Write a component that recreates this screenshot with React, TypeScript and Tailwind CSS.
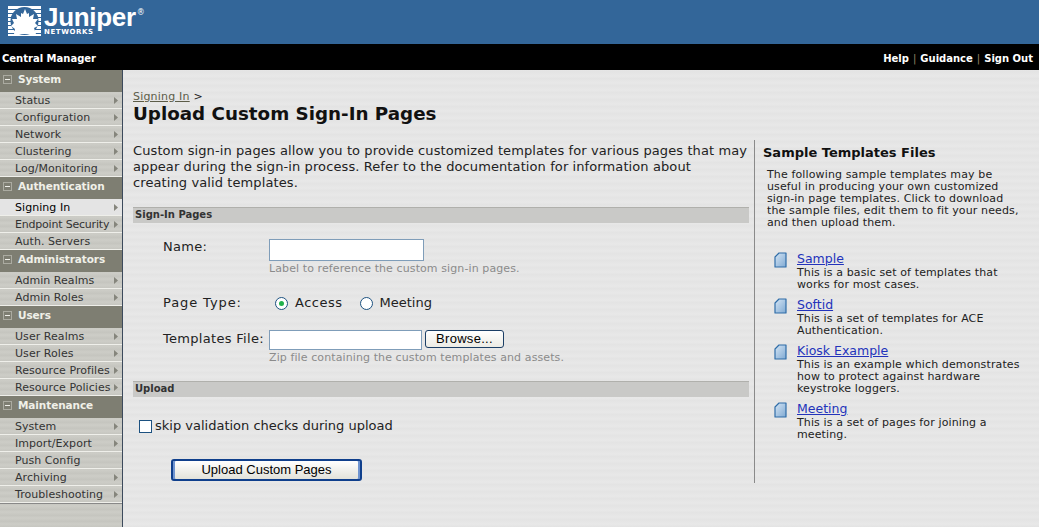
const V = "[font-family:'DejaVu_Sans',Verdana,sans-serif]";

function Chevron() {
  return (
    <svg width="4" height="7" viewBox="0 0 4 7" className="shrink-0">
      <path d="M0 0L4 3.5L0 7Z" fill="#85857c" />
    </svg>
  );
}

function Minus() {
  return (
    <svg width="9" height="9" viewBox="0 0 9 9" className="shrink-0">
      <rect x="0.5" y="0.5" width="8" height="8" fill="none" stroke="#d8d8d0" strokeDasharray="1 1" />
      <rect x="2" y="4" width="5" height="1" fill="#f0f0ea" />
    </svg>
  );
}

function Item({ label, arrow = true, active = false }: { label: string; arrow?: boolean; active?: boolean }) {
  return (
    <div
      className={`flex h-[17px] items-center justify-between whitespace-nowrap border-b border-[#efefea] pl-[15px] pr-[4px] text-[11px] leading-none ${
        active ? "bg-[#e4e4e4] text-black" : "bg-[#c8c8c2] bg-[repeating-linear-gradient(0deg,#c6c6c0_0px,#cdcdc7_3px,#c4c4be_6px)] text-[#333]"
      } ${label === "Endpoint Security" ? "tracking-[-0.2px]" : "tracking-[0.05px]"}`}
    >
      <span>{label}</span>
      {arrow && <Chevron />}
    </div>
  );
}

function Header({ label }: { label: string }) {
  return (
    <div className="flex h-[22px] items-center gap-[6px] bg-[#7e7e72] pb-[4px] pl-[3px] text-[10.5px] font-bold leading-none tracking-[-0.1px] text-[#f0f0e8]">
      <Minus />
      <span>{label}</span>
    </div>
  );
}

function Section({ title, items }: { title: string; items: [string, boolean?, boolean?][] }) {
  return (
    <div>
      <Header label={title} />
      {items.map(([l, a, act]) => (
        <Item key={l} label={l} arrow={a !== false} active={!!act} />
      ))}
    </div>
  );
}

function SectionBar({ label }: { label: string }) {
  return (
    <div className="h-[16px] border-t border-[#b0b0ac] bg-[#c9c9c7] pl-[2px] text-[10px] font-bold leading-[14px] text-[#333]">
      {label}
    </div>
  );
}

function DocIcon() {
  return (
    <svg width="13" height="16" viewBox="0 0 13 16" className="shrink-0">
      <defs>
        <linearGradient id="doc" x1="0" y1="0" x2="1" y2="1">
          <stop offset="0" stopColor="#d6e6f5" />
          <stop offset="1" stopColor="#7fa9d2" />
        </linearGradient>
      </defs>
      <path d="M5 1H12V15H1V5Z" fill="url(#doc)" stroke="#2f6da8" strokeWidth="1.2" strokeLinejoin="round" />
    </svg>
  );
}

function Sample({ title, text }: { title: string; text: string[] }) {
  return (
    <div className="flex gap-[10px] pl-[11px]">
      <div className="pt-[2px]">
        <DocIcon />
      </div>
      <div>
        <a className="block text-[12.5px] leading-[17px] text-[#2233bb] underline">{title}</a>
        <div className="text-[11px] leading-[12px] tracking-[0.12px] text-[#222]">
          {text.map((t) => (
            <div key={t}>{t}</div>
          ))}
        </div>
      </div>
    </div>
  );
}

function Logo() {
  return (
    <div className="flex items-start pl-[8px] pt-[6px] text-white">
      <svg width="33" height="30" viewBox="0 0 33 30" className="shrink-0">
        <rect x="0" y="0" width="33" height="30" fill="#fff" />
        {[3, 7, 11, 15, 19, 23, 27].map((y) => (
          <rect key={y} x="0" y={y} width="33" height="1" fill="#336699" />
        ))}
        <circle cx="16.5" cy="15" r="14" fill="#336699" />
        <path d="M17 3L19 8L21 7L21 11L26 8L25 13L30 13L27 17L30 20L26 22L28 28H6L7 23L3 20L6 17L4 13L9 13L8 8L13 11L13 7L15 8Z" fill="#fff" />
      </svg>
      <div className="ml-[3px] flex flex-col pt-[1px]">
        <div className="flex items-start">
          <span className="font-['Liberation_Sans',Arial,sans-serif] text-[26px] font-bold leading-[21px] tracking-[-0.3px]">
            Juniper
          </span>
          <span className="ml-[1px] pt-[2px] text-[8px] leading-none">®</span>
        </div>
        <div className="mt-[1px] text-[7px] font-bold leading-[7px] tracking-[0.6px]">NETWORKS</div>
      </div>
    </div>
  );
}

export default function App() {
  return (
    <div className={`flex h-[527px] w-[1039px] flex-col overflow-hidden ${V}`}>
      <div className="h-[44px] bg-[#336699]">
        <Logo />
      </div>
      <div className="flex h-[26px] items-center justify-between bg-black pl-[2px] pr-[6px] pt-[3px] text-[10px] font-bold text-white">
        <span>Central Manager</span>
        <span className="flex gap-[4px]">
          <span>Help</span>
          <span className="font-normal text-[#998866]">|</span>
          <span>Guidance</span>
          <span className="font-normal text-[#998866]">|</span>
          <span>Sign Out</span>
        </span>
      </div>
      <div className="flex min-h-0 flex-1">
        <div className="w-[123px] shrink-0 border-r border-[#3c4a5c] bg-[#c8c8c2] bg-[repeating-linear-gradient(0deg,#c6c6c0_0px,#cdcdc7_3px,#c4c4be_6px)]">
          <Section
            title="System"
            items={[["Status"], ["Configuration"], ["Network"], ["Clustering"], ["Log/Monitoring"]]}
          />
          <Section
            title="Authentication"
            items={[["Signing In", true, true], ["Endpoint Security"], ["Auth. Servers", false]]}
          />
          <Section title="Administrators" items={[["Admin Realms"], ["Admin Roles"]]} />
          <Section
            title="Users"
            items={[["User Realms"], ["User Roles"], ["Resource Profiles"], ["Resource Policies"]]}
          />
          <Section
            title="Maintenance"
            items={[["System"], ["Import/Export"], ["Push Config", false], ["Archiving"], ["Troubleshooting"]]}
          />
          <div className="border-t border-[#888]" />
        </div>
        <div className="flex-1 bg-[#e5e5e5] bg-[repeating-linear-gradient(0deg,#e3e3e3_0px,#e8e8e8_3px,#e4e4e4_7px)] pl-[10px] pt-[20px] text-[#222]">
          <div className="text-[11px] leading-[13px] tracking-[0.2px]">
            <span className="text-[#5c5c48] underline">Signing In</span> &gt;
          </div>
          <h1 className="text-[18.3px] font-bold leading-[22px] text-[#111]">Upload Custom Sign-In Pages</h1>
          <div className="mt-[15px] flex">
            <div className="w-[616px] shrink-0">
              <p className="whitespace-nowrap pt-[3px] text-[13px] leading-[16px] tracking-[0.1px] text-[#222]">
                Custom sign-in pages allow you to provide customized templates for various pages that may
                <br />
                appear during the sign-in process. Refer to the documentation for information about
                <br />
                creating valid templates.
              </p>
              <div className="mt-[16px]">
                <SectionBar label="Sign-In Pages" />
              </div>
              <div className="mt-[16px] flex">
                <label className="w-[136px] pl-[30px] text-[13px] leading-[16px] tracking-[0.3px]">Name:</label>
                <div>
                  <div className="h-[22px] w-[155px] border border-[#7f9db9] bg-white" />
                  <div className="mt-[1px] text-[11px] leading-[13px] tracking-[0.1px] text-[#8b8b8b]">
                    Label to reference the custom sign-in pages.
                  </div>
                </div>
              </div>
              <div className="mt-[20px] flex items-center text-[13px] leading-[16px]">
                <label className="w-[136px] pl-[30px] tracking-[0.9px]">Page Type:</label>
                <span className="ml-[6px] flex h-[13px] w-[13px] items-center justify-center rounded-full border border-[#1c5180] bg-white">
                  <span className="h-[5px] w-[5px] rounded-full bg-[#22b14c]" />
                </span>
                <span className="ml-[7px] tracking-[0.5px]">Access</span>
                <span className="ml-[17px] h-[13px] w-[13px] rounded-full border border-[#1c5180] bg-white" />
                <span className="ml-[7px]">Meeting</span>
              </div>
              <div className="mt-[19px] flex">
                <label className="w-[136px] pl-[30px] pt-[1px] text-[13px] leading-[16px] tracking-[0.3px]">Templates File:</label>
                <div>
                  <div className="flex">
                    <div className="h-[20px] w-[153px] border border-[#7f9db9] bg-white" />
                    <button className="ml-[3px] h-[18px] w-[79px] rounded-[3px] border border-[#1c3f66] bg-gradient-to-b from-white to-[#ecebe4] font-['Liberation_Sans',Arial,sans-serif] text-[13px] leading-[16px] tracking-[0.3px] text-black">
                      Browse...
                    </button>
                  </div>
                  <div className="mt-[1px] text-[11px] leading-[13px] tracking-[0.1px] text-[#8b8b8b]">
                    Zip file containing the custom templates and assets.
                  </div>
                </div>
              </div>
              <div className="mt-[17px]">
                <SectionBar label="Upload" />
              </div>
              <div className="mt-[21px] flex items-center pl-[6px] text-[13px] leading-[16px]">
                <span className="h-[13px] w-[13px] border border-[#1c5180] bg-white" />
                <span className="ml-[3px] text-[#222]">skip validation checks during upload</span>
              </div>
              <button className="ml-[38px] mt-[25px] h-[22px] w-[191px] rounded-[3px] border-[2px] border-[#0f3f8c] bg-gradient-to-b from-white to-[#e2e2da] font-['Liberation_Sans',Arial,sans-serif] text-[13px] leading-[16px] text-black shadow-[inset_2px_0_0_#6f94d0,inset_-2px_0_0_#6f94d0]">
                Upload Custom Pages
              </button>
            </div>
            <div className="ml-[5px] h-[343px] flex-1 border-l border-[#8a8a8a] pl-[8px]">
              <h2 className="mt-[5px] text-[13px] font-bold leading-[16px] text-[#111]">Sample Templates Files</h2>
              <div className="ml-[4px] mt-[8px] text-[11px] leading-[12px] tracking-[0.13px] text-[#222]">
                The following sample templates may be
                <br />
                useful in producing your own customized
                <br />
                sign-in page templates. Click to download
                <br />
                the sample files, edit them to fit your needs,
                <br />
                and then upload them.
              </div>
              <div className="mt-[21px] flex flex-col gap-[5px]">
                <Sample title="Sample" text={["This is a basic set of templates that", "works for most cases."]} />
                <Sample title="Softid" text={["This is a set of templates for ACE", "Authentication."]} />
                <Sample
                  title="Kiosk Example"
                  text={["This is an example which demonstrates", "how to protect against hardware", "keystroke loggers."]}
                />
                <Sample title="Meeting" text={["This is a set of pages for joining a", "meeting."]} />
              </div>
            </div>
          </div>
        </div>
      </div>
    </div>
  );
}
